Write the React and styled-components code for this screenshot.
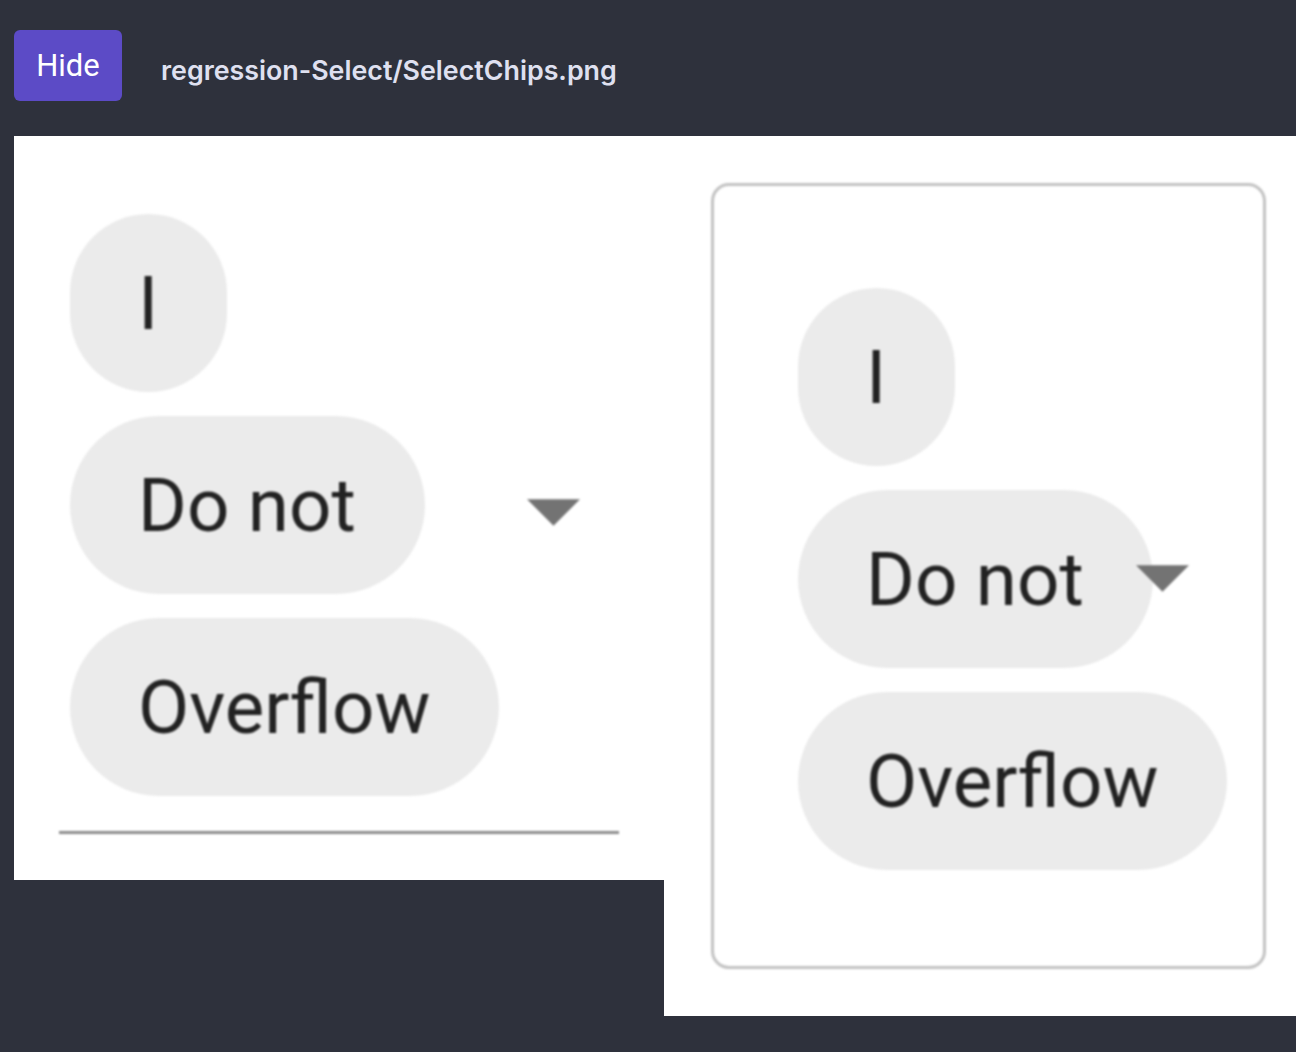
import styled, { createGlobalStyle } from 'styled-components'

const GlobalStyle = createGlobalStyle`
  html, body {
    margin: 0;
    padding: 0;
    background: #2e313c;
    overflow: hidden;
  }
  * {
    box-sizing: border-box;
  }
`

const Page = styled.div`
  width: 1296px;
  min-height: 1052px;
  background: #2e313c;
  overflow: hidden;
`

const Header = styled.header`
  height: 136px;
  display: flex;
  align-items: flex-start;
  gap: 39px;
  padding: 30px 14px 0;
`

const HideButton = styled.button`
  width: 108px;
  height: 71px;
  border: none;
  border-radius: 6px;
  background: #5c4bc6;
  color: #ffffff;
  font-family: Roboto, 'Noto Sans', sans-serif;
  font-size: 31px;
  font-weight: 400;
  cursor: pointer;
`

const Title = styled.span`
  margin-top: 22px;
  color: #dfe0f0;
  font-family: Inter, 'Noto Sans', sans-serif;
  font-size: 26.8px;
  font-weight: 600;
  line-height: 36px;
`

const Shots = styled.div`
  display: flex;
  align-items: flex-start;
  padding-left: 14px;
`

const Shot = styled.div`
  flex: none;
  width: 650px;
  height: ${(p) => p.$height}px;
  background: #ffffff;
  padding: ${(p) => p.$pad};
`

const Soft = styled.div`
  filter: blur(0.9px);
`

// standard variant: chips over a bottom underline
const StandardSelect = styled.div`
  position: relative;
  width: 560px;
  padding: 0 0 35px 11px;
  border-bottom: 3px solid #8c8c8c;
`

// outlined variant: chips inside a rounded frame
const OutlinedSelect = styled.div`
  position: relative;
  width: 555px;
  height: 786px;
  padding: 102px 0 0 84px;
  border: 3px solid #c2c2c2;
  border-radius: 18px;
`

const ChipList = styled.div`
  display: flex;
  flex-direction: column;
  align-items: flex-start;
  gap: 24px;
`

const Chip = styled.div`
  height: 178px;
  display: flex;
  align-items: center;
  padding: 0 69px 0 68px;
  border-radius: 89px;
  background: #ebebeb;
  color: #222222;
  font-family: Roboto, 'Liberation Sans', sans-serif;
  font-size: 74.5px;
  white-space: nowrap;
`

const Arrow = styled.svg`
  position: absolute;
  top: ${(p) => p.$top}px;
  right: ${(p) => p.$right}px;
  width: 53px;
  height: 27px;
`

const ArrowIcon = ({ top, right }) => (
  <Arrow $top={top} $right={right} viewBox="0 0 10 5">
    <path d="M0 0 L5 5 L10 0 Z" fill="#737373" />
  </Arrow>
)

const Chips = () => (
  <ChipList>
    <Chip>I</Chip>
    <Chip>Do not</Chip>
    <Chip>Overflow</Chip>
  </ChipList>
)

export default function App() {
  return (
    <Page>
      <GlobalStyle />
      <Header>
        <HideButton>Hide</HideButton>
        <Title>regression-Select/SelectChips.png</Title>
      </Header>
      <Shots>
        <Shot $height={744} $pad="78px 0 0 45px">
          <Soft>
            <StandardSelect>
              <Chips />
              <ArrowIcon top={285} right={39} />
            </StandardSelect>
          </Soft>
        </Shot>
        <Shot $height={880} $pad="47px 0 0 47px">
          <Soft>
            <OutlinedSelect>
              <Chips />
              <ArrowIcon top={379} right={74} />
            </OutlinedSelect>
          </Soft>
        </Shot>
      </Shots>
    </Page>
  )
}
